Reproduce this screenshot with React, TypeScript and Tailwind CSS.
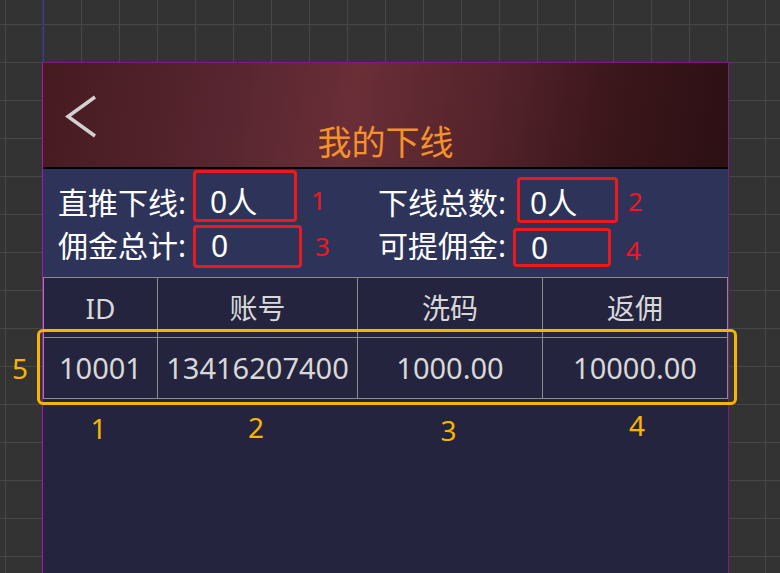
const cols = ["ID", "账号", "洗码", "返佣"]
const row = ["10001", "13416207400", "1000.00", "10000.00"]

const App = () => {
  return (
    <div
      className="relative w-[780px] h-[573px] overflow-hidden bg-[#333333] bg-[linear-gradient(to_right,#474747_1px,transparent_1px),linear-gradient(to_bottom,#474747_1px,transparent_1px)] bg-[size:38px_38px] bg-[position:5px_24px] pt-[62px] pl-[42px]"
      style={{ fontFamily: '"Noto Sans", "Noto Sans CJK SC", sans-serif' }}
    >
      {/* guide line */}
      <div className="absolute left-[42px] top-0 h-[62px] w-px bg-[#2b2ba8]"></div>

      <div className="w-[687px] h-[511px] border-t border-r border-l border-t-[#7d1a88] border-r-[#7d1a88] border-l-[#b012b8] bg-[#24243f]">
        {/* header */}
        <div className="relative h-[106px] border-b-2 border-black bg-[linear-gradient(100deg,#461a21_0%,#582630_28%,#6a2e37_45%,#54232b_65%,#3b161b_82%,#2c1013_100%)] flex items-end justify-center pb-[8px]">
          <svg className="absolute left-[20px] top-[30px]" width="40" height="50" viewBox="0 0 40 50">
            <path d="M32 4 L5 23.5 L32 43" fill="none" stroke="#d2d2d2" strokeWidth="3.5" strokeLinejoin="miter" />
          </svg>
          <p className="text-[34px] leading-[34px] text-[#f3922a]">我的下线</p>
        </div>

        {/* stats */}
        <div className="h-[108px] bg-[#2e3459] pt-[19px] pl-[15px] text-[30px] leading-[30px] text-white">
          <div className="grid grid-cols-[320px_1fr] gap-y-[13px]">
            <div className="flex items-center h-[30px]">
              <span className="w-[135px]">直推下线:</span>
              <span className="w-[104px] h-[52px] mb-[14px] flex items-center pl-[14px] pt-[12px] border-[3px] border-[#ec1a1f] rounded-[4px]">0人</span>
              <span className="ml-[14px] mb-[6px] text-[26px] text-[#ec1a1f]">1</span>
            </div>
            <div className="flex items-center h-[30px]">
              <span className="w-[139px]">下线总数:</span>
              <span className="w-[101px] h-[46px] mb-[6px] flex items-center pl-[10px] pt-[6px] border-[3px] border-[#ec1a1f] rounded-[4px]">0人</span>
              <span className="ml-[10px] mb-[4px] text-[26px] text-[#ec1a1f]">2</span>
            </div>
            <div className="flex items-center h-[30px]">
              <span className="w-[135px]">佣金总计:</span>
              <span className="w-[109px] h-[43px] flex items-center pl-[15px] border-[3px] border-[#ec1a1f] rounded-[4px]">0</span>
              <span className="ml-[13px] text-[26px] text-[#ec1a1f]">3</span>
            </div>
            <div className="flex items-center h-[30px]">
              <span className="w-[135px]">可提佣金:</span>
              <span className="w-[98px] h-[39px] mt-[3px] flex items-center pl-[15px] border-[3px] border-[#ec1a1f] rounded-[4px]">0</span>
              <span className="ml-[15px] mt-[8px] text-[26px] text-[#ec1a1f]">4</span>
            </div>
          </div>
        </div>

        {/* table */}
        <div className="grid grid-cols-[114px_200px_185px_1fr] border-t border-l border-[#8c8c8c] bg-[#24243f]">
          {cols.map((c) => (
            <div key={c} className="h-[60px] flex items-center justify-center border-r border-b border-[#8c8c8c] text-[28px] text-[#d8d8d8]">
              {c}
            </div>
          ))}
          {row.map((v, i) => (
            <div key={i} className="h-[61px] flex items-center justify-center border-r border-b border-[#8c8c8c] text-[29px] text-[#d8d8d8]">
              {v}
            </div>
          ))}
        </div>

        {/* column numbers */}
        <div className="grid grid-cols-[111px_204px_181px_196px] pt-[12px] text-[28px] leading-[28px] text-[#f8b400]">
          <span className="text-center mt-[3px]">1</span>
          <span className="text-center mt-[2px]">2</span>
          <span className="text-center mt-[5px]">3</span>
          <span className="text-center">4</span>
        </div>
      </div>

      {/* annotation: row 5 */}
      <div className="absolute left-[37px] top-[329px] w-[700px] h-[76px] border-[3px] border-[#f8b400] rounded-[6px]"></div>
      <span className="absolute left-[12px] top-[354px] text-[28px] leading-[28px] text-[#f8b400]">5</span>
    </div>
  )
}

export default App
